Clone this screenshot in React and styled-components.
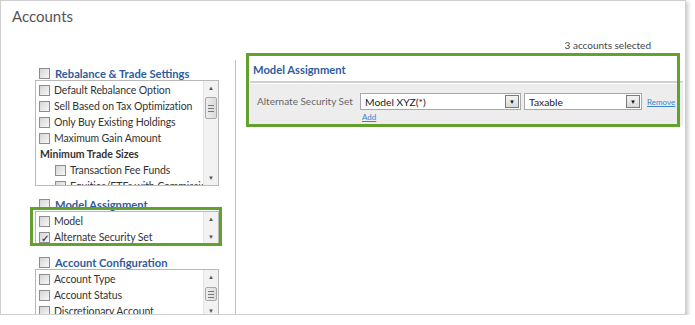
import styled, { createGlobalStyle } from 'styled-components'

const GlobalStyle = createGlobalStyle`
  html, body {
    margin: 0;
    padding: 0;
    background: #ffffff;
  }
  body {
    font-family: Lato, "Noto Sans", sans-serif;
    font-size: 11px;
    color: #333;
  }
`

const rebalanceItems = [
  { label: 'Default Rebalance Option' },
  { label: 'Sell Based on Tax Optimization' },
  { label: 'Only Buy Existing Holdings' },
  { label: 'Maximum Gain Amount' },
  { label: 'Minimum Trade Sizes', group: true },
  { label: 'Transaction Fee Funds', indent: true },
  { label: 'Equities/ETFs with Commissions', indent: true },
]

const modelItems = [
  { label: 'Model' },
  { label: 'Alternate Security Set', checked: true },
]

const configItems = [
  { label: 'Account Type' },
  { label: 'Account Status' },
  { label: 'Discretionary Account' },
]

function ScrollBar({ thumb }) {
  return (
    <Track>
      <Arrow>▲</Arrow>
      {thumb && (
        <Thumb $top={thumb.top} $height={thumb.height}>
          <span /><span /><span />
        </Thumb>
      )}
      <Arrow className='down'>▼</Arrow>
    </Track>
  )
}

function ListBox({ items, height, thumb }) {
  return (
    <Box $height={height}>
      <Items>
        {items.map((it, i) =>
          it.group ? (
            <GroupLabel key={i}>{it.label}</GroupLabel>
          ) : (
            <Item key={i} $indent={it.indent}>
              <Check>{it.checked ? '✓' : ''}</Check>
              <span>{it.label}</span>
            </Item>
          )
        )}
      </Items>
      <ScrollBar thumb={thumb} />
    </Box>
  )
}

function Select({ value, width }) {
  return (
    <SelectBox $width={width}>
      <span>{value}</span>
      <DropBtn>▼</DropBtn>
    </SelectBox>
  )
}

export default function App() {
  return (
    <>
      <GlobalStyle />
      <Window>
        <Title>Accounts</Title>
        <Selected>3 accounts selected</Selected>
        <Body>
          <LeftCol>
            <Section>
              <SectionHead>
                <Check />
                <span>Rebalance &amp; Trade Settings</span>
              </SectionHead>
              <ListBox items={rebalanceItems} height={106} thumb={{ top: 16, height: 22 }} />
            </Section>
            <Section>
              <SectionHead>
                <Check />
                <span>Model Assignment</span>
              </SectionHead>
              <Highlight $inset='-4px -3px -1px -5px'>
                <ListBox items={modelItems} height={34} />
              </Highlight>
            </Section>
            <Section>
              <SectionHead>
                <Check />
                <span>Account Configuration</span>
              </SectionHead>
              <ListBox items={configItems} height={50} thumb={{ top: 17, height: 14 }} />
            </Section>
          </LeftCol>
          <Divider />
          <RightCol>
            <Highlight $inset='-4px 3px -1px -4px'>
              <Panel>
                <PanelHead>Model Assignment</PanelHead>
                <PanelRow>
                  <RowLabel>Alternate Security Set</RowLabel>
                  <Fields>
                    <FieldLine>
                      <Select value='Model XYZ(*)' width={161} />
                      <Select value='Taxable' width={118} />
                      <Link>Remove</Link>
                    </FieldLine>
                    <Link>Add</Link>
                  </Fields>
                </PanelRow>
              </Panel>
            </Highlight>
          </RightCol>
        </Body>
      </Window>
    </>
  )
}

const Window = styled.div`
  width: 686px;
  height: 315px;
  border: 1px solid #cfcfcf;
  box-shadow: 2px 2px 4px rgba(0, 0, 0, 0.22);
  background: #fff;
  overflow: hidden;
  box-sizing: border-box;
  display: flex;
  flex-direction: column;
`

const Title = styled.div`
  font-size: 15px;
  color: #555;
  padding: 5px 0 0 11px;
  line-height: 20px;
`

const Selected = styled.div`
  align-self: flex-end;
  margin: 12px 34px 0 0;
  font-size: 10px;
  color: #444;
  line-height: 14px;
`

const Body = styled.div`
  display: flex;
  flex: 1;
  margin-top: 1px;
`

const LeftCol = styled.div`
  width: 184px;
  margin-left: 34px;
  padding-top: 13px;
  display: flex;
  flex-direction: column;
`

const Section = styled.div`
  display: flex;
  flex-direction: column;
  margin-bottom: 11px;
  &:nth-child(2) {
    margin-bottom: 10px;
  }
`

const SectionHead = styled.div`
  display: flex;
  align-items: center;
  gap: 5px;
  height: 14px;
  padding-left: 4px;
  font-weight: 700;
  color: #2f5c9b;
  font-size: 11.2px;
`

const Box = styled.div`
  height: ${({ $height }) => $height}px;
  border: 1px solid #b9b9b9;
  box-sizing: border-box;
  display: flex;
  overflow: hidden;
  background: #fff;
`

const Items = styled.div`
  flex: 1;
  overflow: hidden;
  padding-top: 1px;
`

const Item = styled.div`
  display: flex;
  align-items: center;
  gap: 4px;
  height: 16px;
  padding-left: ${({ $indent }) => ($indent ? 19 : 3)}px;
  white-space: nowrap;
  font-size: 10.5px;
  letter-spacing: -0.1px;
  color: #333;
`

const GroupLabel = styled.div`
  height: 16px;
  line-height: 16px;
  padding-left: 4px;
  font-weight: 700;
  font-size: 10.5px;
  color: #333;
`

const Check = styled.span`
  flex: none;
  width: 11px;
  height: 11px;
  box-sizing: border-box;
  border: 1px solid #8d8d8d;
  background: linear-gradient(135deg, #d6d6d6, #f7f7f7);
  display: grid;
  place-items: center;
  font-size: 10px;
  line-height: 1;
  color: #3c4f78;
  font-weight: 700;
`

const Track = styled.div`
  position: relative;
  width: 14px;
  flex: none;
  background: #f2f2f2;
  border-left: 1px solid #e4e4e4;
`

const Arrow = styled.div`
  position: absolute;
  left: 0;
  right: 0;
  top: 2px;
  text-align: center;
  font-size: 6px;
  line-height: 10px;
  color: #555;
  &.down {
    top: auto;
    bottom: 2px;
  }
`

const Thumb = styled.div`
  position: absolute;
  left: 1px;
  right: 1px;
  top: ${({ $top }) => $top}px;
  height: ${({ $height }) => $height}px;
  border: 1px solid #a9a9a9;
  border-radius: 2px;
  background: linear-gradient(90deg, #ececec, #dcdcdc);
  box-sizing: border-box;
  display: flex;
  flex-direction: column;
  justify-content: center;
  align-items: center;
  gap: 2px;
  span {
    width: 6px;
    height: 1px;
    background: #777;
  }
`

const Highlight = styled.div`
  position: relative;
  &::after {
    content: '';
    position: absolute;
    inset: ${({ $inset }) => $inset};
    border: 3px solid #63a12f;
    pointer-events: none;
  }
`

const Divider = styled.div`
  width: 1px;
  background: #a9c3e2;
  margin: 7px 0 0 16px;
`

const RightCol = styled.div`
  flex: 1;
  padding: 4px 2px 0 14px;
`

const Panel = styled.div`
  display: flex;
  flex-direction: column;
`

const PanelHead = styled.div`
  font-weight: 700;
  color: #2f5c9b;
  font-size: 11.2px;
  line-height: 16px;
  padding: 5px 0 3px 3px;
  border-bottom: 2px solid #d0d0d0;
`

const PanelRow = styled.div`
  display: flex;
  align-items: flex-start;
  background: #ededed;
  margin-top: 1px;
  height: 42px;
  padding-top: 9px;
  box-sizing: border-box;
`

const RowLabel = styled.div`
  width: 103px;
  flex: none;
  padding-left: 7px;
  color: #666;
  line-height: 17px;
  font-size: 10px;
  white-space: nowrap;
`

const Fields = styled.div`
  display: flex;
  flex-direction: column;
  align-items: flex-start;
`

const FieldLine = styled.div`
  display: flex;
  align-items: center;
  gap: 3px;
`

const SelectBox = styled.div`
  width: ${({ $width }) => $width}px;
  height: 17px;
  box-sizing: border-box;
  border: 1px solid #a8a8a8;
  background: #fff;
  display: flex;
  align-items: center;
  justify-content: space-between;
  padding: 0 1px 0 4px;
  font-size: 10.3px;
  color: #222;
`

const DropBtn = styled.span`
  width: 14px;
  height: 13px;
  box-sizing: border-box;
  border: 1px solid #7b7b7b;
  background: linear-gradient(#f4f4f4, #d9d9d9);
  display: grid;
  place-items: center;
  font-size: 6px;
  color: #111;
`

const Link = styled.a`
  color: #3c84cc;
  font-size: 8px;
  text-decoration: underline;
  line-height: 12px;
  margin-left: 2px;
  margin-top: 1px;
  cursor: pointer;
`
